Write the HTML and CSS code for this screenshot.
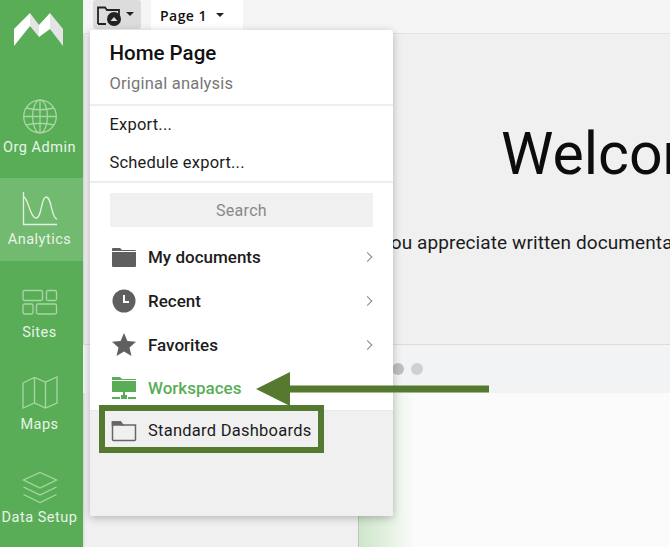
FILE: index.html
```html
<!DOCTYPE html>
<html lang="en">
<head>
<meta charset="utf-8">
<title>Home Page</title>
<link rel="stylesheet" href="styles.css">
</head>
<body>
<div class="app">
  <nav class="sidebar">
    <div class="logo">
      <svg width="49" height="33" viewBox="0 0 49 33"><path d="M0 16L16 0v13L0 33zM25 12L36 0v16l-11 8z" fill="#fff"/><path d="M16 0l9 12v12l-9-11zM36 0l13 16v17L36 16z" fill="#e4e4e4"/></svg>
    </div>
    <a class="nav-item">
      <svg width="36" height="36" viewBox="0 0 36 36" fill="none" stroke="#a9d6a6" stroke-width="1.3"><circle cx="18" cy="17.500" r="16.300"/><ellipse cx="18" cy="17.500" rx="7.500" ry="16.300"/><path d="M18 1.200v32.600M1.700 17.500h32.600M4.200 9c8 2 19.600 2 27.600 0M4.200 26c8-2 19.600-2 27.600 0"/></svg>
      <span>Org Admin</span>
    </a>
    <a class="nav-item active">
      <svg width="36" height="36" viewBox="0 0 36 36" fill="none" stroke="#e4f2e3" stroke-width="1.300"><path d="M1.500 1v32.500H35"/><path d="M1.500 6C6 6 8 27 14 27c6 0 5-21 10-21 6 0 5 21 11 22"/></svg>
      <span>Analytics</span>
    </a>
    <a class="nav-item">
      <svg width="36" height="36" viewBox="0 0 36 36" fill="none" stroke="#a9d6a6" stroke-width="1.300"><rect x="1" y="6.500" width="19.500" height="10" rx="1.500"/><rect x="24.500" y="6.500" width="10" height="10" rx="1.500"/><rect x="1" y="20" width="10" height="10" rx="1.500"/><rect x="14.500" y="20" width="20" height="10" rx="1.500"/></svg>
      <span>Sites</span>
    </a>
    <a class="nav-item">
      <svg width="36" height="36" viewBox="0 0 36 36" fill="none" stroke="#a9d6a6" stroke-width="1.300"><path d="M1 7l11.500-5.500L23.500 6 35 1v26l-11.500 5L12.500 27 1 32zM12.500 1.500V27M23.500 6v26"/></svg>
      <span>Maps</span>
    </a>
    <a class="nav-item">
      <svg width="36" height="36" viewBox="0 0 36 36" fill="none" stroke="#a9d6a6" stroke-width="1.300"><path d="M18 3.500L34.500 11 18 19 1.500 11zM1.500 18L18 26 34.500 18M1.500 25.500L18 33.500 34.500 25.500"/></svg>
      <span>Data Setup</span>
    </a>
  </nav>
  <div class="main">
    <header class="toolbar">
      <button class="folder-btn">
        <svg width="26" height="20" viewBox="0 0 26 20"><path d="M1 18V1.500h7l2 2.500h12v5M1 18h8" fill="none" stroke="#222" stroke-width="1.800"/><circle cx="17" cy="13" r="7" fill="#222"/><path d="M13.500 15l3.500-4 3.500 4z" fill="#ddd"/></svg>
        <i class="caret"></i>
      </button>
      <div class="page-tab">Page 1 <i class="caret"></i></div>
    </header>
    <section class="welcome">
      <h1>Welcome</h1>
      <p>If you appreciate written documentation</p>
    </section>
    <section class="preview">
      <div class="preview-bar"><i class="dot dark"></i><i class="dot"></i></div>
      <div class="preview-body"></div>
    </section>
  </div>
</div>

<div class="menu">
  <div class="menu-head">
    <div class="menu-title">Home Page</div>
    <div class="menu-sub">Original analysis</div>
  </div>
  <div class="menu-actions">
    <div>Export...</div>
    <div>Schedule export...</div>
  </div>
  <div class="menu-tree">
    <div class="search">Search</div>
    <div class="tree-item">
      <svg width="26" height="22" viewBox="0 0 26 22"><path d="M1 3a1 1 0 0 1 1-1h7l2 2h13a1 1 0 0 1 1 1H1z" fill="#5f5f5f"/><path d="M1 6h24v14a1 1 0 0 1-1 1H2a1 1 0 0 1-1-1z" fill="#5f5f5f"/></svg>
      <span>My documents</span><i class="chev"></i>
    </div>
    <div class="tree-item">
      <svg width="26" height="24" viewBox="0 0 26 24"><circle cx="13" cy="12" r="11.500" fill="#5f5f5f"/><path d="M13 6v7h5" fill="none" stroke="#fff" stroke-width="2"/></svg>
      <span>Recent</span><i class="chev"></i>
    </div>
    <div class="tree-item">
      <svg width="26" height="24" viewBox="0 0 26 24"><path d="M13 0l3.400 8 8.600.7-6.500 5.700 2 8.600L13 18.400 5.500 23l2-8.600L1 8.700 9.600 8z" fill="#5f5f5f"/></svg>
      <span>Favorites</span><i class="chev"></i>
    </div>
    <div class="tree-item green">
      <svg width="26" height="24" viewBox="0 0 26 24"><path d="M1 1h8l2 2h14v1H1z" fill="#5aad57"/><path d="M1 5h24v11H1z" fill="#5aad57"/><path d="M13 16v4M1 22h8M17 22h8" stroke="#5aad57" stroke-width="2"/><rect x="10" y="19" width="6" height="4" fill="#5aad57"/></svg>
      <span>Workspaces</span>
    </div>
  </div>
  <div class="menu-selected">
    <div class="tree-item std">
      <svg width="26" height="22" viewBox="0 0 26 22" fill="none" stroke="#666" stroke-width="1.500"><path d="M1.500 19.500V2h8l2 3h13v14.500a1 1 0 0 1-1 1h-21a1 1 0 0 1-1-1z"/><path d="M1.500 2h8l2 3h-10z" fill="#666"/></svg>
      <span>Standard Dashboards</span>
    </div>
  </div>
</div>

<div class="callout-box"></div>
<svg class="callout-arrow" width="233" height="36" viewBox="0 0 233 36"><path d="M0 18L34 1v13.500h199v7H34V35z" fill="#55792f"/></svg>
</body>
</html>
```

FILE: styles.css
```css
* { box-sizing: border-box; }
html, body { margin: 0; height: 100%; overflow: hidden; }
body { font-family: Roboto, "Liberation Sans", sans-serif; background: #f0f0f0; color: #111; }
.app { display: flex; height: 547px; width: 670px; }

.sidebar { width: 83px; flex: none; background: #5aad57; display: flex; flex-direction: column; gap: 9.500px; box-shadow: 1px 0 2px rgba(0,0,0,.12); }
.logo { height: 76px; padding: 13px 0 0 14px; flex: none; }
.nav-item { height: 83px; flex: none; display: flex; flex-direction: column; align-items: center; justify-content: flex-end; gap: 5px; color: #e8f4e7; font-size: 14.500px; line-height: 16px; letter-spacing: .5px; padding: 0 4px 13px 0; white-space: nowrap; }
.nav-item svg { flex: none; }
.nav-item.active { background: #72ba6f; }

.main { flex: 1; min-width: 0; display: flex; flex-direction: column; overflow: hidden; }
.toolbar { height: 34px; flex: none; background: #f5f5f5; border-bottom: 1px solid #e2e2e2; display: flex; align-items: flex-start; padding-left: 10px; gap: 10px; }
.folder-btn { width: 48px; height: 29px; border: 0; border-radius: 3px; background: #dcdcdc; display: flex; align-items: center; gap: 3px; padding: 3px 0 0 4px; }
.folder-btn .caret { margin-bottom: 5px; }
.caret { display: inline-block; width: 0; height: 0; border: 4px solid transparent; border-top: 4px solid #222; border-bottom: 0; }
.page-tab { width: 92px; height: 33px; background: #fff; display: flex; align-items: center; gap: 9px; padding: 0 0 3px 9px; font-family: "Open Sans", sans-serif; font-weight: 600; font-size: 14px; letter-spacing: .45px; }

.welcome { height: 311px; flex: none; border-bottom: 1px solid #dcdce0; padding: 85px 0 0 282px; white-space: nowrap; }
.welcome h1 { margin: 0 0 0 136px; font-size: 59px; font-weight: 400; line-height: 70px; color: #0c0c0c; }
.welcome p { margin: 42px 0 0; font-size: 19px; line-height: 24px; color: #1c1c1c; letter-spacing: .1px; }

.preview { flex: 1; display: flex; flex-direction: column; }
.preview-bar { height: 48px; background: #f2f3f5; display: flex; align-items: center; gap: 7px; padding: 0 0 0 309px; flex: none; }
.dot { width: 12px; height: 12px; border-radius: 50%; background: #cfd0d2; }
.dot.dark { background: #bdbec0; }
.preview-body { flex: 1; margin-left: 275px; background: #fbfbfb; border-left: 1px solid #b9cdb6; position: relative; }
.preview-body::before { content: ""; position: absolute; inset: 0 auto 0 0; width: 55px; background: linear-gradient(90deg, #cfe6cb 0, #dcedd9 35%, rgba(250,250,250,0) 100%); }

.menu { position: absolute; left: 90px; top: 30px; width: 303px; height: 486px; background: #fff; border-radius: 2px; box-shadow: 0 2px 8px rgba(0,0,0,.25); display: flex; flex-direction: column; overflow: hidden; }
.menu-head { height: 76px; padding: 9px 19.500px 0; border-bottom: 2px solid #eeeeee; }
.menu-title { font-size: 20.500px; font-weight: 500; line-height: 28px; color: #111; }
.menu-sub { font-size: 16.500px; line-height: 22px; margin-top: 6px; color: #777; letter-spacing: .2px; }
.menu-actions { height: 77px; padding: 0 19.500px; border-bottom: 2px solid #eeeeee; font-size: 16.500px; letter-spacing: .2px; display: flex; flex-direction: column; justify-content: center; gap: 16px; line-height: 22px; color: #1c1c1c; }
.menu-tree { flex: none; height: 227px; padding: 10px 20px 0; }
.search { height: 34px; background: #f0f0f0; color: #888; font-size: 16px; letter-spacing: .3px; display: flex; align-items: center; justify-content: center; margin-bottom: 8.500px; }
.tree-item { height: 43.700px; display: flex; align-items: center; gap: 11px; font-size: 17px; font-weight: 500; color: #1c1c1c; position: relative; padding-left: 1px; }
.tree-item svg { flex: none; }
.tree-item.green { color: #5aad57; }
.chev { position: absolute; right: 2px; top: 50%; width: 7px; height: 7px; border-top: 1.300px solid #888; border-right: 1.300px solid #888; transform: translateY(-50%) rotate(45deg); }
.menu-selected { flex: 1; background: #f0f0f0; border-top: 1px solid #e8e8e8; padding: 0 20px; }
.std { height: 41px; margin-top: -1px; font-weight: 400; letter-spacing: .25px; font-size: 16.500px; }

.callout-box { position: absolute; left: 99px; top: 405px; width: 225px; height: 48px; border: 6px solid #55792f; }
.callout-arrow { position: absolute; left: 256px; top: 371px; }
```
